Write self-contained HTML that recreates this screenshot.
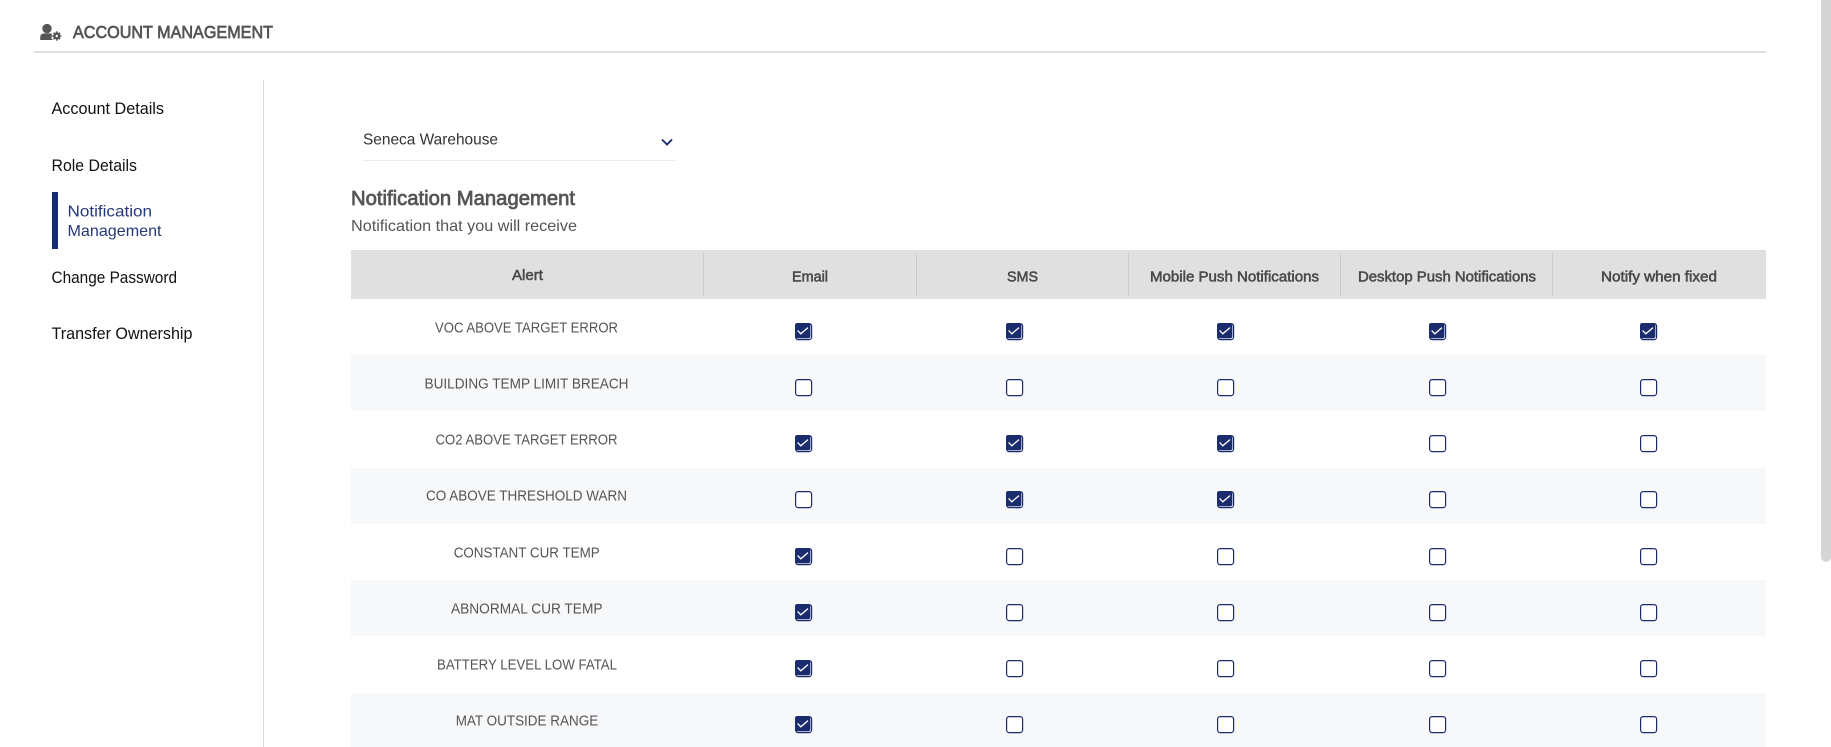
<!DOCTYPE html>
<html lang="en">
<head>
<meta charset="utf-8">
<title>Account Management</title>
<style>
html,body{margin:0;padding:0;background:#fff;width:1831px;height:747px;overflow:hidden}
svg{display:block;position:absolute;left:0;top:0}
text{font-family:"Liberation Sans",Arial,sans-serif}
.side{font-size:16.4px;fill:#111}
.nav{font-size:16px;fill:#26387a}
.th{font-size:14.6px;fill:#4a4a4a;stroke:#4a4a4a;stroke-width:.55px}
.td{font-size:14.4px;fill:#555}
.sep{fill:#c9c9c9}
</style>
</head>
<body>
<svg width="1831" height="747" viewBox="0 0 1831 747" xmlns="http://www.w3.org/2000/svg">
<defs>
<g id="u"><rect x=".6" y=".6" width="16" height="16" rx="2.6" fill="#fff" stroke="#1b2c6e" stroke-width="1.2"/></g>
<g id="c"><rect x=".6" y=".6" width="16" height="16" rx="2.6" fill="#fff" stroke="#1b2c6e" stroke-width="1.2"/><rect x="0" y="0" width="15.4" height="15.4" rx="2.2" fill="#1b2c6e"/><path d="M2.6 7.4 L5.8 10.8 L13 4.6" fill="none" stroke="#fff" stroke-width="1.3"/></g>
</defs>

<rect x="1821" y="0" width="10" height="562" rx="5" fill="#d5d5d5"/>
<rect x="1821" y="0" width="10" height="10" fill="#d5d5d5"/>

<!-- Page header -->
<circle cx="47" cy="28.6" r="4.7" fill="#555"/>
<path d="M40.2 40 V37.2 C40.2 34.6 42.3 33.4 44.4 33.4 H49.6 C50.6 33.4 51.3 33.6 52 34 L51.4 38.4 L53 40 Z" fill="#555"/>
<circle cx="56.8" cy="36" r="2.4" fill="none" stroke="#555" stroke-width="2.4"/>
<path d="M56.8 31.4V33M56.8 39V40.6M52.2 36H53.8M59.8 36H61.4M53.6 32.8L54.7 33.9M58.9 38.1L60 39.2M60 32.8L58.9 33.9M54.7 38.1L53.6 39.2" stroke="#555" stroke-width="1.6"/>
<text x="73" y="37.8" font-size="17.6" fill="#555" stroke="#555" stroke-width=".7" textLength="200" lengthAdjust="spacingAndGlyphs">ACCOUNT MANAGEMENT</text>
<rect x="34" y="51" width="1732" height="2" fill="#e0e0e0"/>

<!-- Sidebar -->
<rect x="263" y="80" width="1" height="667" fill="#dcdcdc"/>
<text class="side" x="51.5" y="114" textLength="112.5" lengthAdjust="spacingAndGlyphs">Account Details</text>
<text class="side" x="51.5" y="171" textLength="85.5" lengthAdjust="spacingAndGlyphs">Role Details</text>
<rect x="52" y="192" width="6" height="57" fill="#152c73"/>
<text class="nav" x="67.5" y="216.6" textLength="84.5" lengthAdjust="spacingAndGlyphs">Notification</text>
<text class="nav" x="67.5" y="235.8" textLength="94" lengthAdjust="spacingAndGlyphs">Management</text>
<text class="side" x="51.5" y="283" textLength="125.5" lengthAdjust="spacingAndGlyphs">Change Password</text>
<text class="side" x="51.5" y="339" textLength="141" lengthAdjust="spacingAndGlyphs">Transfer Ownership</text>

<!-- Select -->
<text x="363" y="144.5" font-size="16" fill="#333" textLength="135" lengthAdjust="spacingAndGlyphs">Seneca Warehouse</text>
<rect x="363" y="160" width="313" height="1" fill="#ececec"/>
<path d="M662 139.5 L667 144.5 L672 139.5" fill="none" stroke="#1b2c6e" stroke-width="1.9"/>

<!-- Headings -->
<text x="351" y="205" font-size="20.4" fill="#555" stroke="#555" stroke-width=".75" textLength="224" lengthAdjust="spacingAndGlyphs">Notification Management</text>
<text x="351" y="231" font-size="16" fill="#555" textLength="226" lengthAdjust="spacingAndGlyphs">Notification that you will receive</text>

<!-- Table header -->
<rect x="351" y="250" width="1415" height="49" fill="#e0e0e0"/>
<rect class="sep" x="703" y="253" width="1" height="43"/>
<rect class="sep" x="916" y="253" width="1" height="43"/>
<rect class="sep" x="1128" y="253" width="1" height="43"/>
<rect class="sep" x="1340" y="253" width="1" height="43"/>
<rect class="sep" x="1552" y="253" width="1" height="43"/>
<text class="th" x="512" y="280" textLength="31" lengthAdjust="spacingAndGlyphs">Alert</text>
<text class="th" x="792" y="281.5" textLength="36" lengthAdjust="spacingAndGlyphs">Email</text>
<text class="th" x="1007" y="281.5" textLength="31" lengthAdjust="spacingAndGlyphs">SMS</text>
<text class="th" x="1150" y="281.5" textLength="169" lengthAdjust="spacingAndGlyphs">Mobile Push Notifications</text>
<text class="th" x="1358" y="281.5" textLength="178" lengthAdjust="spacingAndGlyphs">Desktop Push Notifications</text>
<text class="th" x="1601" y="281.5" textLength="116" lengthAdjust="spacingAndGlyphs">Notify when fixed</text>

<!-- Stripes -->
<rect x="351" y="355" width="1415" height="56" fill="#f7f8fa"/>
<rect x="351" y="467.5" width="1415" height="56.5" fill="#f7f8fa"/>
<rect x="351" y="580" width="1415" height="56.5" fill="#f7f8fa"/>
<rect x="351" y="693" width="1415" height="54" fill="#f7f8fa"/>

<!-- Row labels -->
<text class="td" x="435" y="332.6" textLength="183" lengthAdjust="spacingAndGlyphs">VOC ABOVE TARGET ERROR</text>
<text class="td" x="424.5" y="388.6" textLength="204" lengthAdjust="spacingAndGlyphs">BUILDING TEMP LIMIT BREACH</text>
<text class="td" x="435.5" y="444.6" textLength="182" lengthAdjust="spacingAndGlyphs">CO2 ABOVE TARGET ERROR</text>
<text class="td" x="426" y="500.6" textLength="201" lengthAdjust="spacingAndGlyphs">CO ABOVE THRESHOLD WARN</text>
<text class="td" x="453.7" y="557.6" textLength="146" lengthAdjust="spacingAndGlyphs">CONSTANT CUR TEMP</text>
<text class="td" x="451" y="613.6" textLength="151.5" lengthAdjust="spacingAndGlyphs">ABNORMAL CUR TEMP</text>
<text class="td" x="437" y="669.6" textLength="180" lengthAdjust="spacingAndGlyphs">BATTERY LEVEL LOW FATAL</text>
<text class="td" x="455.7" y="725.6" textLength="142.5" lengthAdjust="spacingAndGlyphs">MAT OUTSIDE RANGE</text>

<!-- Row 1 -->
<use href="#c" x="795" y="323"/><use href="#c" x="1006" y="323"/><use href="#c" x="1217" y="323"/><use href="#c" x="1429" y="323"/><use href="#c" x="1640" y="323"/>
<!-- Row 2 -->
<use href="#u" x="795" y="379"/><use href="#u" x="1006" y="379"/><use href="#u" x="1217" y="379"/><use href="#u" x="1429" y="379"/><use href="#u" x="1640" y="379"/>
<!-- Row 3 -->
<use href="#c" x="795" y="435"/><use href="#c" x="1006" y="435"/><use href="#c" x="1217" y="435"/><use href="#u" x="1429" y="435"/><use href="#u" x="1640" y="435"/>
<!-- Row 4 -->
<use href="#u" x="795" y="491"/><use href="#c" x="1006" y="491"/><use href="#c" x="1217" y="491"/><use href="#u" x="1429" y="491"/><use href="#u" x="1640" y="491"/>
<!-- Row 5 -->
<use href="#c" x="795" y="548"/><use href="#u" x="1006" y="548"/><use href="#u" x="1217" y="548"/><use href="#u" x="1429" y="548"/><use href="#u" x="1640" y="548"/>
<!-- Row 6 -->
<use href="#c" x="795" y="604"/><use href="#u" x="1006" y="604"/><use href="#u" x="1217" y="604"/><use href="#u" x="1429" y="604"/><use href="#u" x="1640" y="604"/>
<!-- Row 7 -->
<use href="#c" x="795" y="660"/><use href="#u" x="1006" y="660"/><use href="#u" x="1217" y="660"/><use href="#u" x="1429" y="660"/><use href="#u" x="1640" y="660"/>
<!-- Row 8 -->
<use href="#c" x="795" y="716"/><use href="#u" x="1006" y="716"/><use href="#u" x="1217" y="716"/><use href="#u" x="1429" y="716"/><use href="#u" x="1640" y="716"/>
</svg>
</body>
</html>
